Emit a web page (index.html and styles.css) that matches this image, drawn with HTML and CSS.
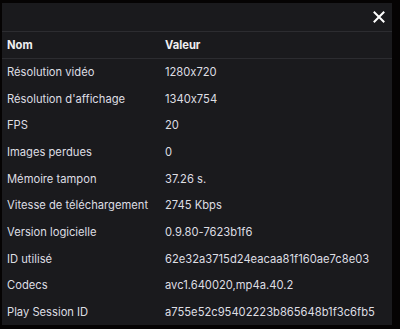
FILE: index.html
```html
<!DOCTYPE html>
<html lang="fr">
<head>
<meta charset="utf-8">
<link rel="stylesheet" href="styles.css">
</head>
<body>
<div class="panel">
  <div class="topbar">
    <button class="close" aria-label="Fermer">
      <svg width="12" height="12" viewBox="0 0 12 12"><path d="M1.5 1.5 L10.5 10.5 M10.5 1.5 L1.5 10.5" stroke="#fff" stroke-width="2" stroke-linecap="square"/></svg>
    </button>
  </div>
  <table class="stats">
    <thead>
      <tr><th>Nom</th><th>Valeur</th></tr>
    </thead>
    <tbody>
      <tr><td>Résolution vidéo</td><td>1280x720</td></tr>
      <tr><td>Résolution d'affichage</td><td>1340x754</td></tr>
      <tr><td>FPS</td><td>20</td></tr>
      <tr><td>Images perdues</td><td>0</td></tr>
      <tr><td>Mémoire tampon</td><td>37.26 s.</td></tr>
      <tr><td>Vitesse de téléchargement</td><td>2745 Kbps</td></tr>
      <tr><td>Version logicielle</td><td>0.9.80-7623b1f6</td></tr>
      <tr><td>ID utilisé</td><td>62e32a3715d24eacaa81f160ae7c8e03</td></tr>
      <tr><td>Codecs</td><td>avc1.640020,mp4a.40.2</td></tr>
      <tr><td>Play Session ID</td><td>a755e52c95402223b865648b1f3c6fb5</td></tr>
    </tbody>
  </table>
</div>
</body>
</html>
```
FILE: styles.css
```css
html, body {
  margin: 0;
  padding: 0;
  background: #050303;
  width: 400px;
  height: 329px;
  overflow: hidden;
}
body {
  font-family: Inter, "Noto Sans", sans-serif;
  color: #efeff1;
  padding-top: 3px;
  padding-left: 2px;
  box-sizing: border-box;
}
.panel {
  width: 390px;
  height: 322px;
  background: #1a1a1d;
}
.topbar {
  height: 28px;
  display: flex;
  justify-content: flex-end;
  align-items: center;
}
.close {
  background: none;
  border: 0;
  padding: 0;
  margin-right: 6px;
  width: 14px;
  height: 14px;
  display: flex;
  align-items: center;
  justify-content: center;
}
.stats {
  width: 100%;
  border-collapse: collapse;
  font-size: 11.2px;
  letter-spacing: 0;
  font-feature-settings: "calt" 0, "liga" 0;
}
.stats th, .stats td {
  text-align: left;
  padding: 0 0 0 5px;
  white-space: nowrap;
}
.stats th:first-child, .stats td:first-child {
  width: 153px;
}
.stats thead tr {
  height: 27px;
  border-top: 1px solid #2c2c30;
  border-bottom: 1px solid #2c2c30;
}
.stats th {
  font-weight: 700;
  color: #efeff1;
}
.stats tbody tr {
  height: 26.7px;
}
.stats td {
  color: #dedee3;
}
```
